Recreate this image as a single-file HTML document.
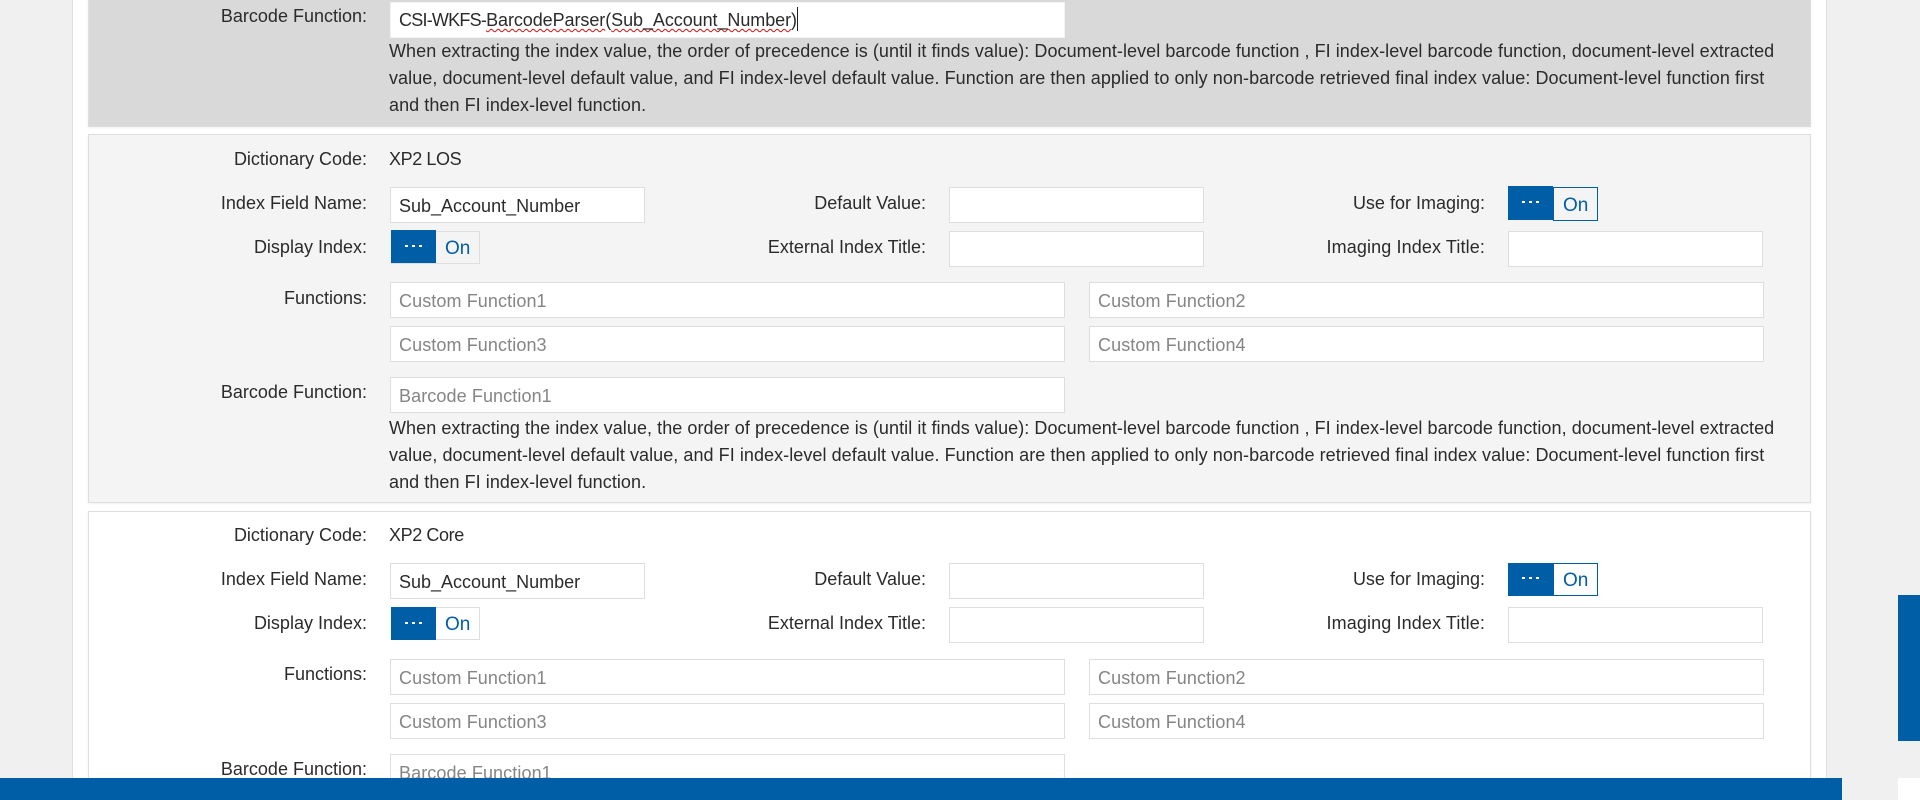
<!DOCTYPE html>
<html><head><meta charset="utf-8"><title>Index Fields</title>
<style>
html,body{margin:0;padding:0;width:1920px;height:800px;overflow:hidden;background:#f0f0f0}
body{position:relative;font-family:"Liberation Sans",sans-serif;font-size:18px;color:#2b2b2b}
div{box-sizing:border-box}
.abs,.p,.l,.v,.t,.i,.tg,.bl,.tr,.d{position:absolute}
#page{left:72px;top:0;width:1755px;height:800px;background:#fff;border-left:1px solid #e0e0e0;border-right:1px solid #e0e0e0}
.p{left:88px;width:1723px;border:1px solid #dedede;box-shadow:0 1px 2px rgba(0,0,0,.06)}
.g{position:absolute;left:0;width:1920px;height:400px}
.l{left:0;height:20px;line-height:20px;text-align:right;white-space:nowrap}
.c1{width:367px}.c2{width:926px}.c3{width:1485px}
.v{left:389px;height:20px;line-height:20px;white-space:nowrap;letter-spacing:-.4px}
.i{height:36px;background:#fff;border:1px solid #dedede;line-height:34px;padding-left:8px;white-space:nowrap}
.ph{color:#858585;letter-spacing:.1px;padding-top:1px}
.t{left:389px;height:27px;line-height:27px;white-space:nowrap;letter-spacing:.06px}
.bl{background:#005ea6}
.tr{color:#005ea6;font-size:19px;text-align:left;padding-left:9px;border:1px solid #dedede}
.d{width:3px;height:2px;background:#fff}
.w{text-decoration:underline wavy #d01010 1px;text-underline-offset:2px}
.n{letter-spacing:-.77px}
#bar{left:0;top:778px;width:1842px;height:22px;background:#005ea6;z-index:5}
#rb{left:1898px;top:595px;width:22px;height:146px;background:#005ea6;z-index:5}
#rw{left:1898px;top:778px;width:22px;height:22px;background:#fff;z-index:5}
#caret{left:797px;top:7px;width:1px;height:24px;background:#222}
</style></head><body>
<div class="abs" id="page"></div>

<!-- top panel -->
<div class="p" style="top:-10px;height:137px;background:#d9d9d9"></div>
<div class="l c1" style="top:6px">Barcode Function:</div>
<div class="i" style="left:390px;top:2px;width:675px;border-color:#f2f2f2;letter-spacing:-.07px"><span class="n">CSI-WKFS-</span><span class="w">BarcodeParser</span>(<span class="w">Sub_Account_Number</span>)</div>
<div class="abs" id="caret"></div>
<div class="t" style="top:38px">When extracting the index value, the order of precedence is (until it finds value): Document-level barcode function , FI index-level barcode function, document-level extracted</div>
<div class="t" style="top:65px">value, document-level default value, and FI index-level default value. Function are then applied to only non-barcode retrieved final index value: Document-level function first</div>
<div class="t" style="top:92px">and then FI index-level function.</div>

<!-- panel 2 -->
<div class="p" style="top:134px;height:369px;background:#f4f4f4"></div>
<div class="g" style="top:0">
<div class="l c1" style="top:149px">Dictionary Code:</div><div class="v" style="top:149px">XP2 LOS</div>
<div class="l c1" style="top:193px">Index Field Name:</div>
<div class="i" style="left:390px;top:187px;width:255px;padding-top:1px">Sub_Account_Number</div>
<div class="l c2" style="top:193px">Default Value:</div>
<div class="i" style="left:949px;top:187px;width:255px"></div>
<div class="l c3" style="top:193px">Use for Imaging:</div>
<div class="tr" style="left:1553px;top:187px;width:45px;height:34px;line-height:35px;border-color:#005ea6">On</div>
<div class="bl" style="left:1508px;top:186px;width:45px;height:34px"></div>
<div class="d" style="left:1522px;top:201px"></div><div class="d" style="left:1529px;top:201px"></div><div class="d" style="left:1536px;top:201px"></div>
<div class="l c1" style="top:237px">Display Index:</div>
<div class="tr" style="left:391px;top:231px;width:89px;height:33px;line-height:33px;padding-left:53px">On</div>
<div class="bl" style="left:391px;top:230px;width:45px;height:33px"></div>
<div class="d" style="left:405px;top:245px"></div><div class="d" style="left:412px;top:245px"></div><div class="d" style="left:419px;top:245px"></div>
<div class="l c2" style="top:237px">External Index Title:</div>
<div class="i" style="left:949px;top:231px;width:255px"></div>
<div class="l c3" style="top:237px;letter-spacing:.12px">Imaging Index Title:</div>
<div class="i" style="left:1508px;top:231px;width:255px"></div>
<div class="l c1" style="top:288px">Functions:</div>
<div class="i ph" style="left:390px;top:282px;width:675px">Custom Function1</div>
<div class="i ph" style="left:1089px;top:282px;width:675px">Custom Function2</div>
<div class="i ph" style="left:390px;top:326px;width:675px">Custom Function3</div>
<div class="i ph" style="left:1089px;top:326px;width:675px">Custom Function4</div>
<div class="l c1" style="top:382px">Barcode Function:</div>
<div class="i ph" style="left:390px;top:377px;width:675px">Barcode Function1</div>
<div class="t" style="top:415px">When extracting the index value, the order of precedence is (until it finds value): Document-level barcode function , FI index-level barcode function, document-level extracted</div>
<div class="t" style="top:442px">value, document-level default value, and FI index-level default value. Function are then applied to only non-barcode retrieved final index value: Document-level function first</div>
<div class="t" style="top:469px">and then FI index-level function.</div>
</div>

<!-- panel 3 -->
<div class="p" style="top:511px;height:320px;background:#fff"></div>
<div class="g" style="top:376px">
<div class="l c1" style="top:149px">Dictionary Code:</div><div class="v" style="top:149px">XP2 Core</div>
<div class="l c1" style="top:193px">Index Field Name:</div>
<div class="i" style="left:390px;top:187px;width:255px;padding-top:1px">Sub_Account_Number</div>
<div class="l c2" style="top:193px">Default Value:</div>
<div class="i" style="left:949px;top:187px;width:255px"></div>
<div class="l c3" style="top:193px">Use for Imaging:</div>
<div class="tr" style="left:1553px;top:187px;width:45px;height:33px;line-height:33px;border-color:#005ea6">On</div>
<div class="bl" style="left:1508px;top:187px;width:45px;height:33px"></div>
<div class="d" style="left:1522px;top:201px"></div><div class="d" style="left:1529px;top:201px"></div><div class="d" style="left:1536px;top:201px"></div>
<div class="l c1" style="top:237px">Display Index:</div>
<div class="tr" style="left:391px;top:231px;width:89px;height:33px;line-height:33px;padding-left:53px">On</div>
<div class="bl" style="left:391px;top:231px;width:45px;height:33px"></div>
<div class="d" style="left:405px;top:246px"></div><div class="d" style="left:412px;top:246px"></div><div class="d" style="left:419px;top:246px"></div>
<div class="l c2" style="top:237px">External Index Title:</div>
<div class="i" style="left:949px;top:231px;width:255px"></div>
<div class="l c3" style="top:237px;letter-spacing:.12px">Imaging Index Title:</div>
<div class="i" style="left:1508px;top:231px;width:255px"></div>
<div class="l c1" style="top:288px">Functions:</div>
<div class="i ph" style="left:390px;top:283px;width:675px">Custom Function1</div>
<div class="i ph" style="left:1089px;top:283px;width:675px">Custom Function2</div>
<div class="i ph" style="left:390px;top:327px;width:675px">Custom Function3</div>
<div class="i ph" style="left:1089px;top:327px;width:675px">Custom Function4</div>
<div class="l c1" style="top:383px">Barcode Function:</div>
<div class="i ph" style="left:390px;top:378px;width:675px">Barcode Function1</div>
</div>

<div class="abs" id="bar"></div>
<div class="abs" id="rb"></div>
<div class="abs" id="rw"></div>
</body></html>
